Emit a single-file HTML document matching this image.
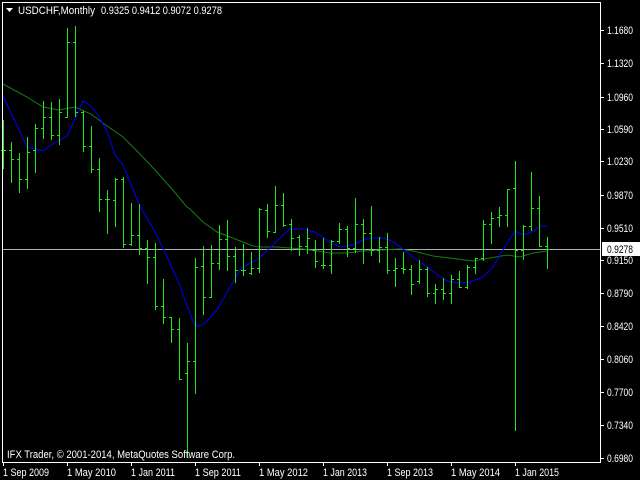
<!DOCTYPE html>
<html><head><meta charset="utf-8"><style>
html,body{margin:0;padding:0;background:#000;width:640px;height:480px;overflow:hidden}
svg{display:block}
text{font-family:"Liberation Sans",sans-serif;font-size:11px;fill:#fff}
</style></head><body>
<svg width="640" height="480" viewBox="0 0 640 480" xmlns="http://www.w3.org/2000/svg" shape-rendering="crispEdges">
<rect width="640" height="480" fill="#000"/>
<line x1="3" y1="249.5" x2="600" y2="249.5" stroke="#b0b0b0" stroke-width="1"/>
<polyline fill="none" stroke="#108010" stroke-width="1" shape-rendering="auto" points="3,84 27,97 43,107 59,110 75,107 91,114 107,126 123,137 139,153 155,170 171,188 187,207 190,209 203,222 217,232 230,237 243,242 253,246 260,247 277,247 290,248 303,249 317,251 330,253 347,253 363,251 380,250 400,249 413,251 433,256 457,259 473,261 490,258 507,255 520,257 533,253 547,251"/>
<polyline fill="none" stroke="#0000ff" stroke-width="1" shape-rendering="auto" points="3,96 27,147 43,151 51,145 67,136 83,101 91,106 99,117 107,131 115,155 123,165 139,204 155,232 163,248 179,283 187,306 195,326 200,326 206,322 217,310 233,282 240,270 247,265 258,259 270,248 280,238 290,229 303,229 315,232 330,242 340,247 353,245 363,240 372,238 382,238 390,240 403,249 413,257 427,267 438,275 447,281 457,283 470,282 483,277 493,267 503,250 515,231 523,235 532,232 540,226 547,226"/>
<path fill="none" stroke="#22e622" stroke-width="1" d="
M3.5 120V169M1 150.5H3M4 150.5H6
M11.5 142V183M9 150.5H11M12 159.5H14
M19.5 153V193M17 159.5H19M20 179.5H22
M27.5 137V189M25 179.5H27M28 152.5H30
M35.5 124V173M33 150.5H35M36 128.5H38
M43.5 101V139M41 128.5H43M44 117.5H46
M51.5 102V140M49 117.5H51M52 135.5H54
M59.5 99V145M57 135.5H59M60 112.5H62
M67.5 28V118M65 117.5H67M68 42.5H70
M75.5 26V117M73 42.5H75M76 112.5H78
M83.5 111V152M81 112.5H83M84 146.5H86
M91.5 126V173M89 146.5H91M92 169.5H94
M99.5 158V212M97 169.5H99M100 199.5H102
M107.5 190V234M105 199.5H107M108 199.5H110
M115.5 178V227M113 200.5H115M116 179.5H118
M123.5 177V248M121 179.5H123M124 244.5H126
M131.5 203V246M129 244.5H131M132 235.5H134
M139.5 204V255M137 235.5H139M140 248.5H142
M147.5 240V284M145 248.5H147M148 257.5H150
M155.5 243V310M153 257.5H155M156 306.5H158
M163.5 279V324M161 306.5H163M164 317.5H166
M171.5 317V343M169 317.5H171M172 329.5H174
M179.5 318V380M177 329.5H179M180 379.5H182
M187.5 343V458M185 373.5H187M188 361.5H190
M195.5 258V394M193 361.5H195M196 267.5H198
M203.5 246V315M201 266.5H203M204 297.5H206
M211.5 245V298M209 297.5H211M212 263.5H214
M219.5 225V270M217 263.5H219M220 239.5H222
M227.5 220V271M225 239.5H227M228 256.5H230
M235.5 247V283M233 256.5H235M236 270.5H238
M243.5 244V276M241 270.5H243M244 270.5H246
M251.5 252V275M249 273.5H251M252 268.5H254
M259.5 208V273M257 268.5H259M260 209.5H262
M267.5 204V238M265 210.5H267M268 231.5H270
M275.5 186V233M273 232.5H275M276 205.5H278
M283.5 193V227M281 205.5H283M284 225.5H286
M291.5 219V251M289 224.5H291M292 238.5H294
M299.5 235V256M297 237.5H299M300 246.5H302
M307.5 228V254M305 246.5H307M308 238.5H310
M315.5 240V268M313 250.5H315M316 261.5H318
M323.5 238V269M321 265.5H323M324 265.5H326
M331.5 240V274M329 265.5H331M332 241.5H334
M339.5 223V244M337 241.5H339M340 229.5H342
M347.5 226V257M345 229.5H347M348 248.5H350
M355.5 198V253M353 248.5H355M356 224.5H358
M363.5 219V264M361 224.5H363M364 233.5H366
M371.5 206V256M369 233.5H371M372 250.5H374
M379.5 237V263M377 250.5H379M380 247.5H382
M387.5 233V274M385 247.5H387M388 270.5H390
M395.5 258V287M393 270.5H395M396 268.5H398
M403.5 252V274M401 268.5H403M404 269.5H406
M411.5 265V295M409 269.5H411M412 284.5H414
M419.5 260V284M417 281.5H419M420 269.5H422
M427.5 267V297M425 269.5H427M428 293.5H430
M435.5 284V304M433 293.5H435M436 289.5H438
M443.5 278V300M441 289.5H443M444 293.5H446
M451.5 275V304M449 293.5H451M452 279.5H454
M459.5 271V288M457 279.5H459M460 287.5H462
M467.5 265V289M465 287.5H467M468 267.5H470
M475.5 258V274M473 267.5H475M476 258.5H478
M483.5 220V261M481 258.5H483M484 224.5H486
M491.5 212V244M489 224.5H491M492 218.5H494
M499.5 207V227M497 217.5H499M500 215.5H502
M507.5 189V227M505 215.5H507M508 189.5H510
M515.5 161V431M513 188.5H515M516 250.5H518
M523.5 225V260M521 250.5H523M524 226.5H526
M531.5 172V231M529 226.5H531M532 208.5H534
M539.5 196V247M537 208.5H539M540 246.5H542
M547.5 237V269M545 246.5H547M548 249.5H550"/>
<path fill="none" stroke="#fff" stroke-width="1" d="M2.5 2V463M600.5 2V463M2 462.5H601M2 2.5H601"/>
<path fill="none" stroke="#fff" d="M601 30.5H604M601 63.5H604M601 97.5H604M601 129.5H604M601 161.5H604M601 195.5H604M601 228.5H604M601 260.5H604M601 293.5H604M601 326.5H604M601 359.5H604M601 392.5H604M601 425.5H604M601 458.5H604
M3.5 463V466M67.5 463V466M131.5 463V466M195.5 463V466M259.5 463V466M323.5 463V466M387.5 463V466M451.5 463V466M515.5 463V466"/>
<g>
<text x="607" y="34" textLength="26" lengthAdjust="spacingAndGlyphs">1.1680</text>
<text x="607" y="67" textLength="26" lengthAdjust="spacingAndGlyphs">1.1320</text>
<text x="607" y="101" textLength="26" lengthAdjust="spacingAndGlyphs">1.0960</text>
<text x="607" y="133" textLength="26" lengthAdjust="spacingAndGlyphs">1.0590</text>
<text x="607" y="165" textLength="26" lengthAdjust="spacingAndGlyphs">1.0230</text>
<text x="607" y="199" textLength="26" lengthAdjust="spacingAndGlyphs">0.9870</text>
<text x="607" y="232" textLength="26" lengthAdjust="spacingAndGlyphs">0.9510</text>
<text x="607" y="264" textLength="26" lengthAdjust="spacingAndGlyphs">0.9150</text>
<text x="607" y="297" textLength="26" lengthAdjust="spacingAndGlyphs">0.8790</text>
<text x="607" y="330" textLength="26" lengthAdjust="spacingAndGlyphs">0.8420</text>
<text x="607" y="363" textLength="26" lengthAdjust="spacingAndGlyphs">0.8060</text>
<text x="607" y="396" textLength="26" lengthAdjust="spacingAndGlyphs">0.7700</text>
<text x="607" y="429" textLength="26" lengthAdjust="spacingAndGlyphs">0.7340</text>
<text x="607" y="462" textLength="26" lengthAdjust="spacingAndGlyphs">0.6980</text>
</g>
<rect x="602" y="242" width="38" height="14" fill="#fff"/>
<text x="607" y="253" textLength="26" lengthAdjust="spacingAndGlyphs" style="fill:#000">0.9278</text>
<g>
<text x="3" y="476" textLength="46" lengthAdjust="spacingAndGlyphs">1 Sep 2009</text>
<text x="67" y="476" textLength="49" lengthAdjust="spacingAndGlyphs">1 May 2010</text>
<text x="131" y="476" textLength="44" lengthAdjust="spacingAndGlyphs">1 Jan 2011</text>
<text x="195" y="476" textLength="46" lengthAdjust="spacingAndGlyphs">1 Sep 2011</text>
<text x="259" y="476" textLength="49" lengthAdjust="spacingAndGlyphs">1 May 2012</text>
<text x="323" y="476" textLength="44" lengthAdjust="spacingAndGlyphs">1 Jan 2013</text>
<text x="387" y="476" textLength="46" lengthAdjust="spacingAndGlyphs">1 Sep 2013</text>
<text x="451" y="476" textLength="49" lengthAdjust="spacingAndGlyphs">1 May 2014</text>
<text x="515" y="476" textLength="44" lengthAdjust="spacingAndGlyphs">1 Jan 2015</text>
</g>
<path d="M6 8H13L9.5 12Z" fill="#fff" shape-rendering="auto"/>
<text x="18" y="14" textLength="77" lengthAdjust="spacingAndGlyphs">USDCHF,Monthly</text>
<text x="101" y="14" textLength="121" lengthAdjust="spacingAndGlyphs">0.9325 0.9412 0.9072 0.9278</text>
<text x="7" y="458" textLength="228" lengthAdjust="spacingAndGlyphs">IFX Trader, © 2001-2014, MetaQuotes Software Corp.</text>
</svg>
</body></html>
